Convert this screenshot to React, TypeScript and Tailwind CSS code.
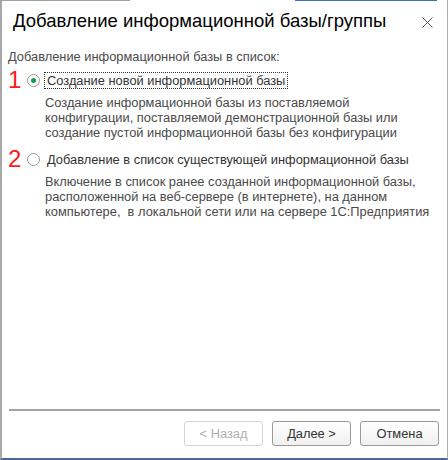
import React from "react";

const font = { fontFamily: '"Liberation Sans", Arial, sans-serif' };

function Radio({ checked }: { checked?: boolean }) {
  return (
    <span className="flex h-[13px] w-[13px] items-center justify-center rounded-full border border-[#9a9a9a] bg-white">
      {checked && <span className="h-[5px] w-[5px] rounded-full bg-[#1a9a4a]" />}
    </span>
  );
}

function Option({
  num,
  checked,
  title,
  lines,
}: {
  num: string;
  checked?: boolean;
  title: string;
  lines: string[];
}) {
  return (
    <div>
      <div className="flex h-[20px] items-center">
        <span className="w-[19px] text-[24px] leading-none text-[#ff1a1a]">{num}</span>
        <Radio checked={checked} />
        <span
          className={`ml-[4px] px-[2px] text-[12.85px] leading-[15px] text-[#333] ${
            checked ? "border border-dotted border-[#333]" : "border border-transparent"
          }`}
        >
          {title}
        </span>
      </div>
      <div className="mt-[5px] pl-[37px] text-[12.85px] leading-[15px] text-[#4a4a4a]">
        {lines.map((l) => (
          <div key={l} className="whitespace-pre">{l}</div>
        ))}
      </div>
    </div>
  );
}

export default function App() {
  return (
    <div style={font} className="relative h-[460px] w-[448px] bg-white">
      <div className="absolute left-0 top-0 h-px w-[130px] bg-[#a0a0a0]" />
      <div className="absolute left-[295px] top-0 h-px w-[142px] bg-[#3b6fb6]" />
      <div className="flex h-[460px] flex-col border-b-2 border-l-2 border-r border-b-[#4a6a95] border-l-[#a8a8a8] border-r-[#b0b0b0]">
        <div className="flex h-[42px] items-center pl-[11px] pr-[14px]">
          <span className="flex-1 text-[18.5px] text-black">Добавление информационной базы/группы</span>
          <svg width="11" height="11" viewBox="0 0 11 11" className="mt-[2px]">
            <path d="M0.5 0.5 L10.5 10.5 M10.5 0.5 L0.5 10.5" stroke="#5a5a5a" strokeWidth="1" fill="none" />
          </svg>
        </div>
        <div className="px-[6px] pt-[7px] text-[12.85px] leading-[15px] text-[#4a4a4a]">
          Добавление информационной базы в список:
        </div>
        <div className="mt-[6px] flex flex-col gap-[9px] pl-[6px]">
          <Option
            num="1"
            checked
            title="Создание новой информационной базы"
            lines={[
              "Создание информационной базы из поставляемой",
              "конфигурации, поставляемой демонстрационной базы или",
              "создание пустой информационной базы без конфигурации",
            ]}
          />
          <Option
            num="2"
            title="Добавление в список существующей информационной базы"
            lines={[
              "Включение в список ранее созданной информационной базы,",
              "расположенной на веб-сервере (в интернете), на данном",
              "компьютере,  в локальной сети или на сервере 1С:Предприятия",
            ]}
          />
        </div>
        <div className="flex-1" />
        <div className="mx-[7px] h-[2px] bg-[#a3a3a3]" />
        <div className="flex justify-end gap-[9px] pb-[12px] pr-[8px] pt-[10px]">
          {["< Назад", "Далее >", "Отмена"].map((b, i) => (
            <button
              key={b}
              className={`h-[25px] w-[79px] rounded-[3px] border text-[12.85px] ${
                i === 0
                  ? "border-[#d4d4d4] text-[#b0b0b0]"
                  : "border-[#9a9a9a] bg-gradient-to-b from-white to-[#f0f0f0] text-[#333]"
              }`}
            >
              {b}
            </button>
          ))}
        </div>
      </div>
    </div>
  );
}
